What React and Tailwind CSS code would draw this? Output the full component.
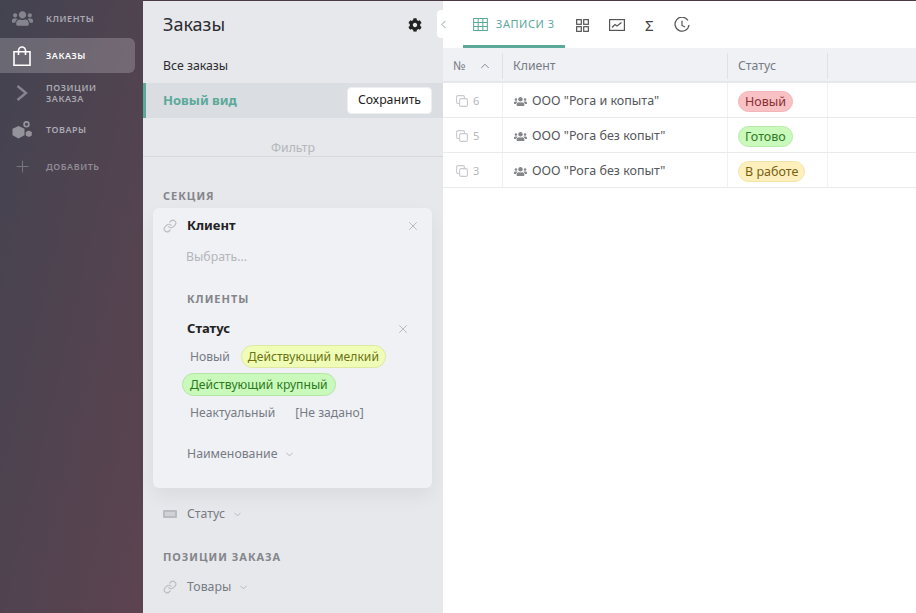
import React from 'react';
import { X, ChevronDown, ChevronUp, ChevronLeft, Plus, Link } from 'lucide-react';
import { FaCog, FaUsers } from 'react-icons/fa';

const BagIcon = ({ className }) => (
  <svg viewBox="0 0 18 20" className={className} fill="none" stroke="currentColor" strokeWidth="1.600">
    <path d="M1 5.800h16v13.400H1z" />
    <path d="M5.500 9V4.500a3.500 3.500 0 0 1 7 0V9" />
  </svg>
);

const ArrowIcon = ({ className }) => (
  <svg viewBox="0 0 12 16" className={className} fill="none" stroke="currentColor" strokeWidth="2.400">
    <path d="M1.500 1l8.500 7-8.500 7" />
  </svg>
);

const BoxesIcon = ({ className }) => (
  <svg viewBox="0 0 20 18" className={className} fill="currentColor">
    <path d="M6.500 5l6 2.800v6.400l-6 3.300-6-3.300V7.800z" />
    <circle cx="14.500" cy="3.200" r="2.400" fill="none" stroke="currentColor" strokeWidth="1.800" />
    <path d="M16.800 9.500l3 1.500v3.400l-3 1.600-3-1.600V11z" />
  </svg>
);

const NumberFieldIcon = ({ className }) => (
  <svg viewBox="0 0 14 8" className={className}>
    <rect width="14" height="8" rx="1" fill="#b8bbc0" />
    <path d="M3 2v4M5 2v4M7 2v4M9 2v4M11 2v4" stroke="#e6e8ec" strokeWidth="1" />
  </svg>
);

const GridIcon = ({ className }) => (
  <svg viewBox="0 0 16 14" className={className} fill="none" stroke="currentColor" strokeWidth="1.100">
    <path d="M.6.600h14.800v12.800H.6zM.6 4.900h14.800M.6 9.100h14.800M5.500.600v12.800M10.500.600v12.800" />
  </svg>
);

const TilesIcon = ({ className }) => (
  <svg viewBox="0 0 14 14" className={className} fill="none" stroke="currentColor" strokeWidth="1.300">
    <rect x=".7" y=".7" width="5" height="5" />
    <rect x="8.300" y=".7" width="5" height="5" />
    <rect x=".7" y="8.300" width="5" height="5" />
    <rect x="8.300" y="8.300" width="5" height="5" />
  </svg>
);

const ChartIcon = ({ className }) => (
  <svg viewBox="0 0 16 12" className={className} fill="none" stroke="currentColor" strokeWidth="1.200">
    <rect x=".6" y=".6" width="14.800" height="10.800" />
    <path d="M3 8.500l3-3 2 1.500 4.500-3.500" />
  </svg>
);

const HistoryIcon = ({ className }) => (
  <svg viewBox="0 0 16 16" className={className} fill="none" stroke="currentColor" strokeWidth="1.200">
    <path d="M14 3.500A7 7 0 1 0 15 8" />
    <path d="M8 3.800V8.500l3 1.500" />
  </svg>
);

const CopyIcon = ({ className }) => (
  <svg viewBox="0 0 12 12" className={className} fill="none" stroke="currentColor" strokeWidth="1.100">
    <path d="M3 8.500H2a1.400 1.400 0 0 1-1.400-1.400V2A1.400 1.400 0 0 1 2 .6h5A1.400 1.400 0 0 1 8.400 2v1" />
    <rect x="3.600" y="3.600" width="7.800" height="7.800" rx="1.500" />
  </svg>
);

const navItems = [
  { label: 'Клиенты', icon: <FaUsers className="w-[21px] h-[17px] text-[#85858e]" /> },
  { label: 'Заказы', icon: <BagIcon className="w-[18px] h-5" />, active: true },
  { label: 'Позиции заказа', icon: <ArrowIcon className="w-[12px] h-4 text-[#85858e]" /> },
  { label: 'Товары', icon: <BoxesIcon className="w-5 h-[18px] text-[#94929b]" /> },
  { label: 'Добавить', icon: <Plus className="w-[19px] h-[19px] text-[#77757f]" strokeWidth={1.300} />, dim: true },
];

const rows = [
  { id: 6, client: 'ООО "Рога и копыта"', status: 'Новый', badge: 'bg-[#f8c1c3] border-[#f3b5b8] text-[#8a2f35]' },
  { id: 5, client: 'ООО "Рога без копыт"', status: 'Готово', badge: 'bg-[#c9f9bb] border-[#b9ecab] text-[#2f7a24]' },
  { id: 3, client: 'ООО "Рога без копыт"', status: 'В работе', badge: 'bg-[#fdf0bd] border-[#f3e5a8] text-[#7a5f10]' },
];

function Sidebar() {
  return (
    <aside className="w-[143px] shrink-0 pr-2 bg-gradient-to-br from-[#434350] to-[#5d4350] text-[#aaaab2]">
      {navItems.map((item) => (
        <div
          key={item.label}
          className={`flex items-center rounded-r-md ${item.active ? 'bg-white/20 text-white h-[35px] my-px' : 'h-[37px]'} ${item.dim ? 'text-[#8f8c96]' : ''}`}
        >
          <span className="w-[46px] shrink-0 flex justify-center pr-[2px]">{item.icon}</span>
          <span className="text-[9px] leading-[11px] font-semibold uppercase tracking-[0.06em]">{item.label}</span>
        </div>
      ))}
    </aside>
  );
}

function FilterPanel() {
  return (
    <section className="w-[300px] shrink-0 bg-[#e6e8ec] text-[#222] border-t border-[#4b3a45]">
      <div className="h-[47px] pl-5 pr-[21px] flex items-center justify-between">
        <h1 className="text-lg font-normal text-[#2b2b30] mb-[1px]">Заказы</h1>
        <FaCog className="w-[14px] h-[14px] text-[#222]" />
      </div>
      <div className="h-[35px] pl-5 pt-[2px] flex items-center text-[12.3px] text-[#2b2b30]">Все заказы</div>
      <div className="h-[35px] border-l-[3px] border-[#5ba99b] bg-[#dadde1] pl-[17px] pr-[11px] flex items-center justify-between">
        <span className="text-[13px] font-bold text-[#5ba99b]">Новый вид</span>
        <button className="h-[27px] w-[85px] bg-white rounded border border-[#eceef0] text-[12.3px] text-[#222]">Сохранить</button>
      </div>
      <div className="mt-[21px] h-[18px] border-b border-[#d6d8dc] text-center text-[12.3px] leading-[17px] text-[#b4b6ba]">Фильтр</div>

      <h2 className="mt-[31px] pl-5 text-[11px] leading-[15px] font-bold uppercase tracking-[0.09em] text-[#85868a]">Секция</h2>
      <div className="mt-[5px] ml-[10px] mr-[11px] h-[280px] rounded-md bg-[#eff1f5] shadow-[0_8px_20px_rgba(0,0,0,0.06)] pt-[9px]">
        <div className="flex items-center h-[18px] pl-[10px] pr-[12px]">
          <Link className="w-[14px] h-[14px] text-[#bcbdc1]" />
          <span className="ml-[10px] text-[13px] font-bold text-[#222] grow">Клиент</span>
          <X className="w-[14px] h-[14px] text-[#b0b2b6]" strokeWidth={1.500} />
        </div>
        <div className="mt-[13px] pl-[33px] text-[12.3px] leading-[18px] text-[#b4b6ba]">Выбрать...</div>
        <div className="mt-[25px] pl-[34px] text-[11px] leading-[15px] font-bold uppercase tracking-[0.09em] text-[#85868a]">Клиенты</div>

        <div className="mt-[14px] pl-[34px] pr-[22px] flex items-center h-[18px]">
          <span className="text-[13px] font-bold text-[#222] grow">Статус</span>
          <X className="w-[14px] h-[14px] text-[#b0b2b6]" strokeWidth={1.500} />
        </div>
        <div className="mt-[7px] pl-[29px] flex flex-col gap-[5px] text-[12.15px] leading-[21px]">
          <div className="flex">
            <span className="h-[23px] px-[7px] border border-transparent text-[#777b84]">Новый</span>
            <span className="ml-[3px] h-[23px] px-[6px] rounded-full border border-[#dfe8a0] bg-[#f0fdb7] text-[#6b7410]">Действующий мелкий</span>
          </div>
          <div className="flex">
            <span className="h-[23px] px-[7px] rounded-full border border-[#b5e5a6] bg-[#c9f9bb] text-[#2b7a20]">Действующий крупный</span>
          </div>
          <div className="flex">
            <span className="h-[23px] px-[7px] border border-transparent text-[#777b84]">Неактуальный</span>
            <span className="ml-[4px] h-[23px] px-[7px] border border-transparent text-[#777b84]">[Не задано]</span>
          </div>
        </div>
        <div className="mt-[21px] pl-[34px] flex items-center gap-[7px] text-[12.3px] leading-[18px] text-[#777b84]">
          Наименование <ChevronDown className="w-[11px] h-[11px] text-[#b0b2b6]" />
        </div>
      </div>

      <div className="mt-[17px] pl-5 flex items-center h-[18px] text-[12.3px] text-[#777b84]">
        <NumberFieldIcon className="w-[14px] h-2" />
        <span className="ml-[10px]">Статус</span>
        <ChevronDown className="ml-[7px] w-[11px] h-[11px] text-[#b0b2b6]" />
      </div>
      <h2 className="mt-[26px] pl-5 text-[11px] leading-[15px] font-bold uppercase tracking-[0.09em] text-[#85868a]">Позиции заказа</h2>
      <div className="mt-[14px] pl-5 flex items-center h-[18px] text-[12.3px] text-[#777b84]">
        <Link className="w-[14px] h-[14px] text-[#bcbdc1]" />
        <span className="ml-[10px]">Товары</span>
        <ChevronDown className="ml-[7px] w-[11px] h-[11px] text-[#b0b2b6]" />
      </div>
    </section>
  );
}

function RecordsTable() {
  return (
    <main className="grow min-w-0 bg-white relative border-t border-[#4b3a45]">
      <button className="absolute -left-[6px] top-[9px] w-[13px] h-[28px] bg-white rounded-l flex items-center justify-center text-[#7f8a90]">
        <ChevronLeft className="w-[13px] h-[13px]" strokeWidth={1.500} />
      </button>
      <div className="h-[47px] pl-5 flex items-start">
        <div className="h-[47px] w-[102px] pt-[3px] border-b-[3px] border-[#5ba99b] flex items-center pl-[10px] gap-[8px] text-[#5ba99b]">
          <GridIcon className="w-[15px] h-[13px]" />
          <span className="text-[11px] uppercase tracking-[0.05em] whitespace-nowrap">Записи 3</span>
        </div>
        <div className="h-[47px] pt-[1px] flex items-center text-[#555]">
          <TilesIcon className="ml-[11px] w-[13px] h-[13px]" />
          <ChartIcon className="ml-[20px] w-[16px] h-[12px]" />
          <span className="ml-[20px] text-[15px] text-[#444]">Σ</span>
          <HistoryIcon className="ml-[20px] w-[16px] h-[16px]" />
        </div>
      </div>
      <div className="h-[35px] pt-[3px] flex items-center bg-[#eff1f5] border-b-2 border-[#e6e8ec] text-[12.3px] text-[#777b84]">
        <div className="w-[60px] h-[26px] pl-[10px] pr-[10px] flex items-center justify-between border-r border-[#dfe1e5]">
          <span>№</span>
          <ChevronUp className="w-[14px] h-[14px]" strokeWidth={1.500} />
        </div>
        <div className="w-[225px] h-[26px] pl-[10px] flex items-center border-r border-[#dfe1e5]">Клиент</div>
        <div className="w-[100px] h-[26px] pl-[10px] flex items-center border-r border-[#dfe1e5]">Статус</div>
      </div>
      {rows.map((row) => (
        <div key={row.id} className="h-[35px] flex border-b border-[#e8eaed] text-[12.5px] text-[#55575c]">
          <div className="w-[60px] pl-[13px] pt-[2px] flex items-center gap-[5px] border-r border-[#f0f1f3] text-[11px] text-[#b4b6ba]">
            <CopyIcon className="w-3 h-3 text-[#c8cacd]" />
            {row.id}
          </div>
          <div className="w-[225px] pl-[11px] pt-[2px] flex items-center gap-[5px] border-r border-[#f0f1f3] whitespace-nowrap">
            <FaUsers className="w-[13px] h-[11px] text-[#85868a]" />
            {row.client}
          </div>
          <div className="w-[100px] pl-[10px] pt-[2px] flex items-center border-r border-[#f0f1f3]">
            <span className={`h-[21px] px-[6px] rounded-full border leading-[19px] whitespace-nowrap ${row.badge}`}>{row.status}</span>
          </div>
        </div>
      ))}
    </main>
  );
}

export default function App() {
  return (
    <div className="h-[613px] overflow-hidden flex font-['Noto_Sans','Open_Sans',sans-serif]">
      <Sidebar />
      <FilterPanel />
      <RecordsTable />
    </div>
  );
}
